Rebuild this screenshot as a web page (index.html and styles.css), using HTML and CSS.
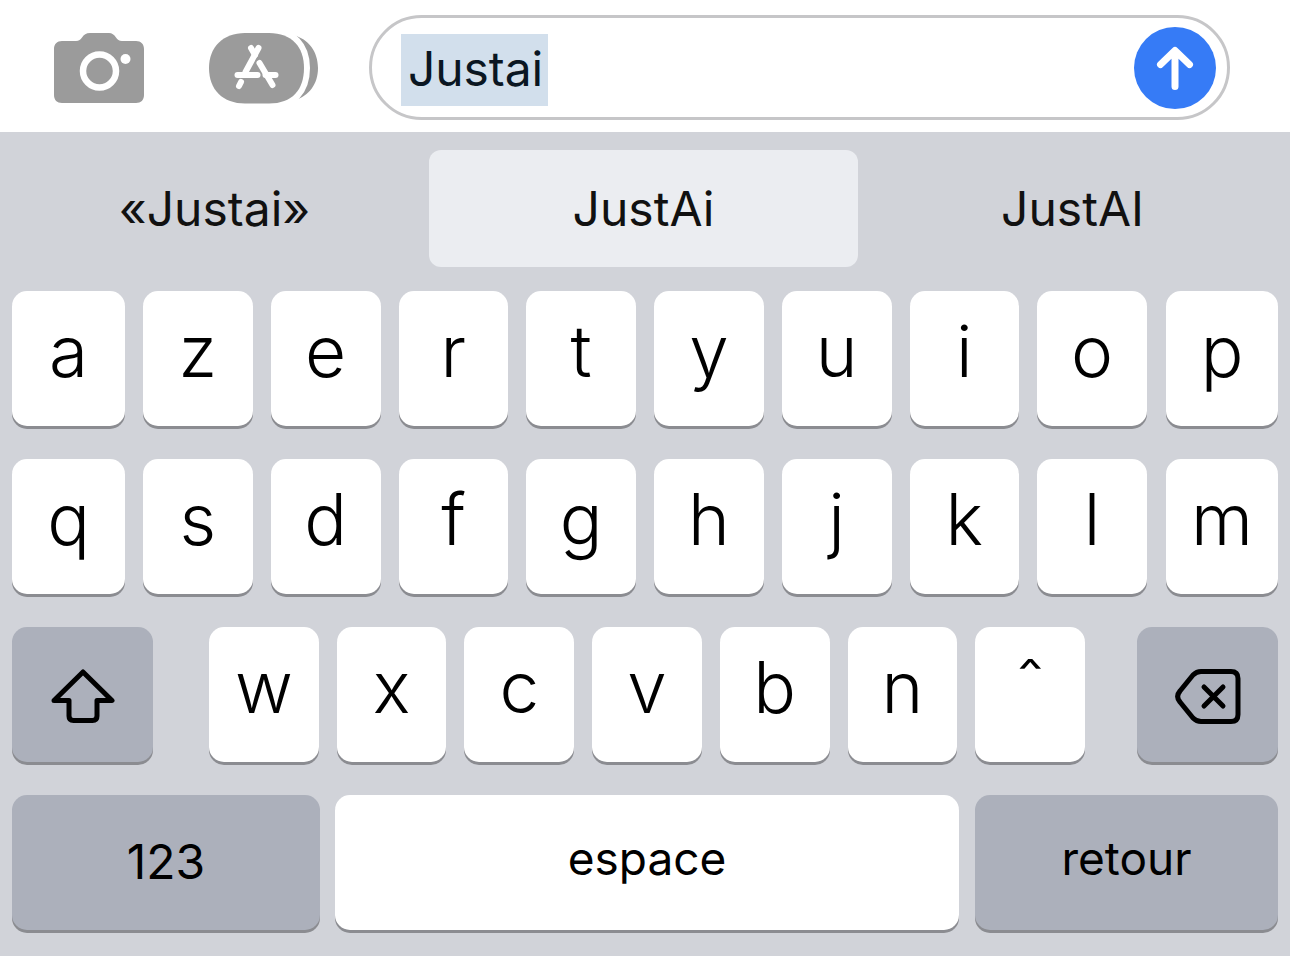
FILE: index.html
```html
<!DOCTYPE html>
<html lang="fr">
<head>
  <meta charset="UTF-8">
  <title>Clavier</title>
  <link rel="stylesheet" href="styles.css">
</head>
<body>
  <header class="topbar">
    <svg class="camera-icon" width="90" height="70" viewBox="0 0 90 70">
      <path fill="#9b9b9b" d="M8 8H22C25 8 26.5 6.5 28 4.5C30 1.5 32 0 36 0H55C58 0 60 1.5 62 4.5C63.5 6.5 65 8 68 8H82C87 8 90 11 90 16V62C90 67 87 70 82 70H8C3 70 0 67 0 62V16C0 11 3 8 8 8Z"/>
      <circle cx="45.5" cy="38" r="16.5" fill="none" stroke="#fff" stroke-width="6.5"/>
      <circle cx="71.5" cy="26" r="5" fill="#fff"/>
    </svg>
    <svg class="apps-icon" width="110" height="72" viewBox="0 0 110 72">
      <path fill="#9b9b9b" d="M84 3C100 7 109 20 109 36C109 52 100 64 86 68C92 60 96 49 96 36C96 23 92 12 84 3Z"/>
      <path fill="#9b9b9b" stroke="#fff" stroke-width="12" d="M36 1H60C83 1 95 15 95 36C95 58 83 71.500 60 71.500H36C14 71.500 0 58 0 36C0 15 14 1 36 1Z"/>
      <path fill="#9b9b9b" d="M36 1H60C83 1 95 15 95 36C95 58 83 71.500 60 71.500H36C14 71.500 0 58 0 36C0 15 14 1 36 1Z"/>
      <g fill="none" stroke="#fff" stroke-width="6" stroke-linecap="round">
        <path d="M49.500 16L36.500 40"/>
        <path d="M32 50L30 54"/>
        <path d="M42 16L46 23"/>
        <path d="M50.500 31L63.500 53"/>
        <path d="M28.500 43H48.500"/>
        <path d="M56.500 43H66.500"/>
      </g>
    </svg>
    <div class="message-field">
      <span class="selected-text">Justai</span>
      <span class="send-button">
        <svg width="82" height="82" viewBox="0 0 82 82">
          <path d="M41 24V59.500M26.500 37.500L41 23.500L55.500 37.500" fill="none" stroke="#fff" stroke-width="7" stroke-linecap="round" stroke-linejoin="round"/>
        </svg>
      </span>
    </div>
  </header>

  <main class="keyboard">
    <div class="suggestions">
      <div class="suggestion">«Justai»</div>
      <div class="suggestion suggestion-active">JustAi</div>
      <div class="suggestion">JustAI</div>
    </div>

    <div class="key-row">
      <div class="key key-first">a</div>
      <div class="key">z</div>
      <div class="key">e</div>
      <div class="key">r</div>
      <div class="key">t</div>
      <div class="key">y</div>
      <div class="key">u</div>
      <div class="key">i</div>
      <div class="key">o</div>
      <div class="key key-last">p</div>
    </div>

    <div class="key-row">
      <div class="key key-first">q</div>
      <div class="key">s</div>
      <div class="key">d</div>
      <div class="key">f</div>
      <div class="key">g</div>
      <div class="key">h</div>
      <div class="key">j</div>
      <div class="key">k</div>
      <div class="key">l</div>
      <div class="key key-last">m</div>
    </div>

    <div class="key-row">
      <div class="key key-gray key-side">
        <svg class="key-icon" width="64" height="56" viewBox="0 0 64 56">
          <path d="M32 3L61 31.500H46V47C46 50 44.500 51.500 41.500 51.500H22.500C19.500 51.500 18 50 18 47V31.500H3Z" fill="none" stroke="#000" stroke-width="5" stroke-linejoin="round"/>
        </svg>
      </div>
      <div class="letter-group">
        <div class="key">w</div>
        <div class="key">x</div>
        <div class="key">c</div>
        <div class="key">v</div>
        <div class="key">b</div>
        <div class="key">n</div>
        <div class="key key-accent">ˆ</div>
      </div>
      <div class="key key-gray key-side">
        <svg class="key-icon" width="66" height="56" viewBox="0 0 66 56">
          <path d="M26 2.500H56C60.500 2.500 63 5 63 9.500V45.500C63 50 60.500 52.500 56 52.500H26C22 52.500 20 51 18 49L5 33C2 29.500 2 25.500 5 22L18 6C20 4 22 2.500 26 2.500Z" fill="none" stroke="#000" stroke-width="5" stroke-linejoin="round"/>
          <path d="M29 18L48 37M48 18L29 37" fill="none" stroke="#000" stroke-width="5" stroke-linecap="round"/>
        </svg>
      </div>
    </div>

    <div class="key-row key-row-bottom">
      <div class="key key-gray key-word key-numbers">123</div>
      <div class="key key-word key-space">espace</div>
      <div class="key key-gray key-word key-return">retour</div>
    </div>
  </main>
</body>
</html>
```
FILE: styles.css
```css
body {
  margin: 0;
  height: 956px;
  overflow: hidden;
  background: #d1d3d9;
  font-family: Inter, "Liberation Sans", sans-serif;
  color: #000;
}
.topbar {
  display: flex;
  align-items: center;
  height: 132px;
  padding: 0 60px 0 54px;
  box-sizing: border-box;
  background: #fff;
}
.camera-icon {
  margin-top: 4px;
  flex: none;
}
.apps-icon {
  margin: 4px 0 0 65px;
  flex: none;
}
.message-field {
  display: flex;
  align-items: center;
  justify-content: space-between;
  flex: 1;
  height: 105px;
  margin: 3px 0 0 50px;
  padding: 0 11px 0 29px;
  box-sizing: border-box;
  border: 3px solid #c6c6c8;
  border-radius: 53px;
}
.selected-text {
  margin-top: 4px;
  padding: 1px 5px 3px 7px;
  background: #d2dfec;
  font-size: 48px;
  line-height: 68px;
  letter-spacing: -0.100px;
  color: #0a1622;
}
.send-button {
  display: flex;
  width: 82px;
  height: 82px;
  border-radius: 50%;
  background: #367bf6;
}
.keyboard {
  display: flex;
  flex-direction: column;
  padding: 18px 12px 0;
}
.suggestions {
  display: grid;
  grid-template-columns: repeat(3, 429px);
  height: 117px;
  margin: 0 -12px 24px;
}
.suggestion {
  display: flex;
  align-items: center;
  justify-content: center;
  font-size: 48px;
  color: #111;
}
.suggestion-active {
  background: #ebedf1;
  border-radius: 12px;
}
.key-row {
  display: flex;
  gap: 18px;
  height: 135px;
  margin-bottom: 33px;
}
.key-row-bottom {
  gap: 15px;
}
.letter-group {
  display: flex;
  flex: 1;
  gap: 18px;
  margin: 0 34px 0 38px;
}
.key {
  display: flex;
  flex: 1;
  align-items: center;
  justify-content: center;
  padding-bottom: 15px;
  box-sizing: border-box;
  background: #fff;
  border-radius: 15px;
  box-shadow: 0 3px 0 #8b8c91;
  font-size: 71px;
  font-weight: 300;
}
.key-first {
  flex: none;
  width: 113px;
}
.key-last {
  flex: none;
  width: 112px;
  margin-left: 1px;
}
.key-gray {
  background: #acb0bb;
}
.key-side {
  flex: none;
  width: 141px;
  padding-bottom: 0;
}
.key-icon {
  margin-top: 5px;
}
.key-word {
  flex: none;
  font-size: 46px;
  font-weight: 400;
  padding-bottom: 10px;
}
.key-numbers {
  width: 308px;
  padding-bottom: 2px;
  font-size: 48px;
}
.key-space {
  width: 624px;
}
.key-return {
  width: 303px;
  margin-left: 1px;
}
```
